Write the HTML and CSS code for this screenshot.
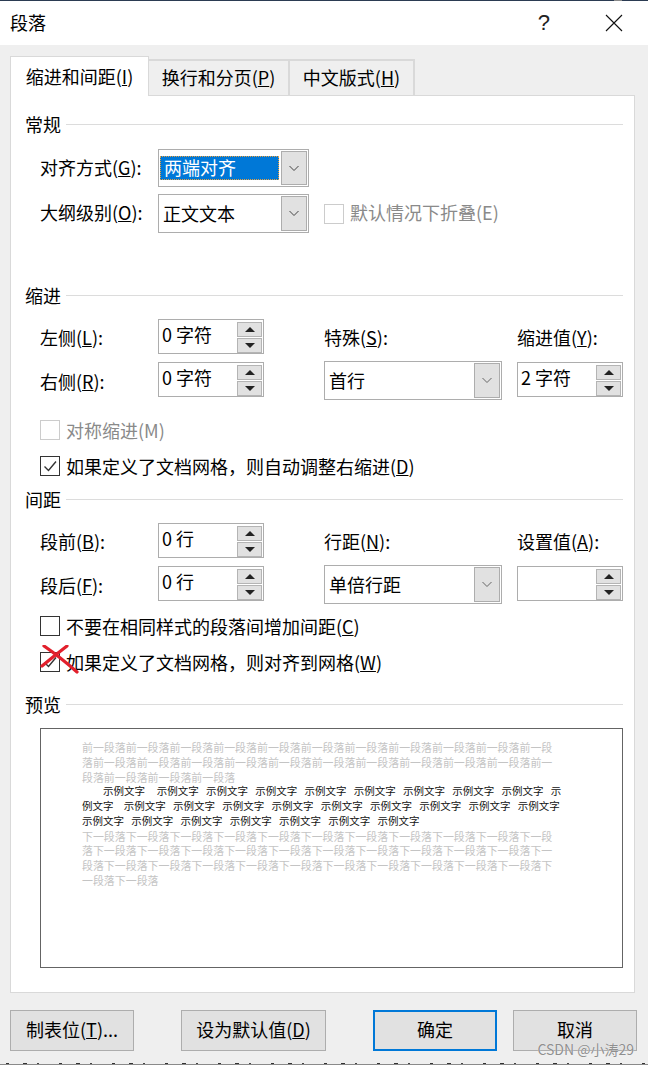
FILE: index.html
```html
<!DOCTYPE html>
<html lang="zh-CN">
<head>
<meta charset="utf-8">
<title>段落</title>
<link rel="stylesheet" href="styles.css">
</head>
<body>
<div class="window">
  <div class="topline"></div>
  <header class="titlebar">
    <span class="title">段落</span>
    <span class="help">?</span>
    <svg class="close" width="18" height="18" viewBox="0 0 18 18"><path d="M1 1 L17 17 M17 1 L1 17" stroke="#111" stroke-width="1.1" fill="none"/></svg>
  </header>
  <main class="dialog">
    <nav class="tabs">
      <div class="tab tab-active">缩进和间距(<u>I</u>)</div>
      <div class="tab tab-2">换行和分页(<u>P</u>)</div>
      <div class="tab tab-3">中文版式(<u>H</u>)</div>
    </nav>
    <div class="panel">
      <div class="heading"><span>常规</span></div>
      <div class="form form-general">
        <label class="lbl">对齐方式(<u>G</u>):</label>
        <div class="select sel-38">
          <div class="sel-value"><span class="highlight">两端对齐</span></div>
          <div class="arrow"><svg width="12" height="7" viewBox="0 0 12 7"><path d="M1.5 1 L6 5.5 L10.500 1" stroke="#444" fill="none"/></svg></div>
        </div>
        <div></div>
        <label class="lbl">大纲级别(<u>O</u>):</label>
        <div class="select sel-39">
          <div class="sel-value"><span class="val">正文文本</span></div>
          <div class="arrow"><svg width="12" height="7" viewBox="0 0 12 7"><path d="M1.5 1 L6 5.5 L10.500 1" stroke="#444" fill="none"/></svg></div>
        </div>
        <div class="check disabled"><span class="box"></span><span class="check-raised">默认情况下折叠(E)</span></div>
      </div>

      <div class="heading sec-indent"><span>缩进</span></div>
      <div class="form form-spin">
        <label class="lbl">左侧(<u>L</u>):</label>
        <div class="spinner"><span class="spin-text">0 字符</span><div class="spin-btns"><div class="spin-btn"><i class="up"></i></div><div class="spin-btn"><i class="down"></i></div></div></div>
        <label class="lbl col-3">特殊(<u>S</u>):</label>
        <label class="lbl">缩进值(<u>Y</u>):</label>

        <label class="lbl">右侧(<u>R</u>):</label>
        <div class="spinner shift"><span class="spin-text">0 字符</span><div class="spin-btns"><div class="spin-btn"><i class="up"></i></div><div class="spin-btn"><i class="down"></i></div></div></div>
        <div class="select sel-39 col-3">
          <div class="sel-value"><span class="val">首行</span></div>
          <div class="arrow"><svg width="12" height="7" viewBox="0 0 12 7"><path d="M1.5 1 L6 5.5 L10.500 1" stroke="#666" fill="none"/></svg></div>
        </div>
        <div class="spinner shift"><span class="spin-text">2 字符</span><div class="spin-btns"><div class="spin-btn"><i class="up"></i></div><div class="spin-btn"><i class="down"></i></div></div></div>
      </div>
      <div class="check disabled indent first-check"><span class="box"></span><span>对称缩进(M)</span></div>
      <div class="check indent next-check"><span class="box"><svg width="18" height="18" viewBox="0 0 18 18"><path d="M3.500 9.500 L7.500 13.500 L15 4.500" stroke="#333" stroke-width="1.400" fill="none"/></svg></span><span>如果定义了文档网格，则自动调整右缩进(<u>D</u>)</span></div>

      <div class="heading sec-spacing"><span>间距</span></div>
      <div class="form form-spin">
        <label class="lbl">段前(<u>B</u>):</label>
        <div class="spinner"><span class="spin-text">0 行</span><div class="spin-btns"><div class="spin-btn"><i class="up"></i></div><div class="spin-btn"><i class="down"></i></div></div></div>
        <label class="lbl col-3">行距(<u>N</u>):</label>
        <label class="lbl">设置值(<u>A</u>):</label>

        <label class="lbl">段后(<u>F</u>):</label>
        <div class="spinner shift"><span class="spin-text">0 行</span><div class="spin-btns"><div class="spin-btn"><i class="up"></i></div><div class="spin-btn"><i class="down"></i></div></div></div>
        <div class="select sel-39 col-3">
          <div class="sel-value"><span class="val">单倍行距</span></div>
          <div class="arrow"><svg width="12" height="7" viewBox="0 0 12 7"><path d="M1.5 1 L6 5.5 L10.500 1" stroke="#666" fill="none"/></svg></div>
        </div>
        <div class="spinner shift"><span class="spin-text"></span><div class="spin-btns"><div class="spin-btn"><i class="up"></i></div><div class="spin-btn"><i class="down"></i></div></div></div>
      </div>
      <div class="check indent spacing-check"><span class="box"></span><span>不要在相同样式的段落间增加间距(<u>C</u>)</span></div>
      <div class="check indent next-check marked">
        <span class="box"><svg width="18" height="18" viewBox="0 0 18 18"><path d="M3.500 9.500 L7.500 13.500 L15 4.500" stroke="#333" stroke-width="1.400" fill="none"/></svg></span>
        <span>如果定义了文档网格，则对齐到网格(<u>W</u>)</span>
        <svg class="red-x" width="40" height="30" viewBox="0 0 40 30"><path d="M2 21 Q14 11 27 1" stroke="#e2202c" stroke-width="3.200" fill="none" stroke-linecap="round"/><path d="M4 1 Q20 12 37 27" stroke="#e2202c" stroke-width="3.200" fill="none" stroke-linecap="round"/></svg>
      </div>

      <div class="heading sec-preview"><span>预览</span></div>
      <div class="preview">
        <div class="pv">前一段落前一段落前一段落前一段落前一段落前一段落前一段落前一段落前一段落前一段落前一段</div>
        <div class="pv">落前一段落前一段落前一段落前一段落前一段落前一段落前一段落前一段落前一段落前一段落前一</div>
        <div class="pv">段落前一段落前一段落前一段落</div>
        <div class="pv sample first-line"><span class="first-word">示例文字</span> 示例文字 示例文字 示例文字 示例文字 示例文字 示例文字 示例文字 示例文字 示</div>
        <div class="pv sample"><span class="tail-word">例文字</span> 示例文字 示例文字 示例文字 示例文字 示例文字 示例文字 示例文字 示例文字 示例文字</div>
        <div class="pv sample">示例文字 示例文字 示例文字 示例文字 示例文字 示例文字 示例文字</div>
        <div class="pv">下一段落下一段落下一段落下一段落下一段落下一段落下一段落下一段落下一段落下一段落下一段</div>
        <div class="pv">落下一段落下一段落下一段落下一段落下一段落下一段落下一段落下一段落下一段落下一段落下一</div>
        <div class="pv">段落下一段落下一段落下一段落下一段落下一段落下一段落下一段落下一段落下一段落下一段落下</div>
        <div class="pv">一段落下一段落</div>
      </div>
    </div>
    <footer class="buttons">
      <button class="btn btn-tabs">制表位(<u>T</u>)...</button>
      <button class="btn btn-default">设为默认值(<u>D</u>)</button>
      <button class="btn btn-ok">确定</button>
      <button class="btn btn-cancel">取消</button>
    </footer>
    <span class="watermark">CSDN @小涛29</span>
  </main>
  <div class="bottomline"></div>
</div>
</body>
</html>
```
FILE: styles.css
```css
* { box-sizing: border-box; }
html, body { margin: 0; padding: 0; }
body {
  width: 648px;
  height: 1065px;
  overflow: hidden;
  font-family: "Noto Sans CJK SC", "Liberation Sans", sans-serif;
  font-size: 18px;
  color: #000;
  background: #efefef;
}
u { text-underline-offset: 1px; text-decoration-thickness: 1px; }
.window { display: flex; flex-direction: column; height: 1065px; }
.topline { height: 1px; flex: none; background: linear-gradient(90deg, #2b3b52 0 614px, #8a8a8a 614px 622px, #2b3b52 622px); }
.titlebar {
  height: 44px;
  flex: none;
  background: #fff;
  display: flex;
  align-items: center;
  padding: 0 25px 0 10px;
}
.title { flex: 1; line-height: 24px; margin-top: -3px; }
.help { font-size: 22px; line-height: 24px; color: #222; margin-right: 55px; font-family: "Liberation Sans", sans-serif; }
.close { display: block; margin-top: -1px; }

.dialog { position: relative; flex: 1; background: #efefef; padding: 12px 13px 0 10px; display: flex; flex-direction: column; min-height: 0; }
.tabs { display: flex; align-items: flex-end; height: 39px; position: relative; z-index: 1; margin-bottom: -1px; }
.tab {
  height: 37px;
  border: 2px solid #d9d9d9;
  border-bottom: 0;
  border-left-width: 0;
  display: flex;
  align-items: center;
  justify-content: center;
  white-space: nowrap;
  line-height: 24px;
  padding-bottom: 3px;
}
.tab-active { height: 40px; width: 139px; background: #fff; border-left: 1px solid #d9d9d9; border-right: 1px solid #d9d9d9; border-top: 1px solid #d9d9d9; padding-bottom: 2px; }
.tab-2 { width: 141px; border-left: 0; }
.tab-3 { width: 125px; }
.panel {
  background: #fff;
  border: 1px solid #d9d9d9;
  height: 898px;
  flex: none;
  padding: 19px 11px 0 14px;
}
.heading { display: flex; align-items: center; gap: 5px; height: 20px; line-height: 20px; }
.heading span { padding-bottom: 2px; }
.heading::after { content: ""; flex: 1; height: 1px; background: #dcdcdc; margin-top: -1px; }
.sec-indent { margin-top: 53px; }
.sec-spacing { margin-top: 14px; }
.sec-preview { margin-top: 23px; }

.form { display: grid; margin-left: 15px; align-items: center; }
.form-general { margin-top: 14px; grid-template-columns: 118px 151px 1fr; row-gap: 7px; column-gap: 0; }
.form-general .check { margin-left: 15px; }
.form-general .lbl { margin-bottom: 3px; }
.check-raised { padding-bottom: 3px; }
.form-spin {
  margin-top: 13px;
  grid-template-columns: 118px 106px 60px 178px 15px 106px;
  grid-template-rows: 35px 39px;
  row-gap: 7px;
}
.form-spin .lbl:nth-child(4) { grid-column: 6; }
.form-spin .col-3 { grid-column: 4; }
.form-spin .select + .spinner { grid-column: 6; }
.lbl { white-space: nowrap; line-height: 20px; }

.select {
  border: 1px solid #adadad;
  background: #fff;
  display: flex;
  align-items: stretch;
}
.sel-38 { height: 38px; }
.sel-39 { height: 39px; }
.sel-value { flex: 1; display: flex; align-items: center; padding: 0 4px; line-height: 24px; white-space: nowrap; }
.val { padding-bottom: 2px; }
.highlight {
  flex: 1;
  height: 24px;
  margin: 0 -3px;
  padding: 0 3px;
  line-height: 21px;
  background: #0078d7;
  color: #fff;
  border: 1px dotted #e8a040;
}
.arrow {
  flex: none;
  width: 26px;
  margin: 1px;
  background: #e1e1e1;
  border: 1px solid #adadad;
  display: flex;
  align-items: center;
  justify-content: center;
}

.spinner {
  border: 1px solid #adadad;
  height: 35px;
  background: #fff;
  display: flex;
  align-self: start;
}
.spinner.shift { margin-top: 1px; }
.spin-text { flex: 1; padding: 1px 0 0 3px; line-height: 26px; white-space: pre; }
.spin-btns { flex: none; width: 25px; margin: 2px 1px 0 0; display: flex; flex-direction: column; gap: 1px; }
.spin-btn {
  height: 15px;
  background: #e1e1e1;
  border: 1px solid #b4b4b4;
  display: flex;
  align-items: center;
  justify-content: center;
}
.spin-btn i { display: block; width: 0; height: 0; border-left: 5px solid transparent; border-right: 5px solid transparent; }
.spin-btn .up { border-bottom: 5px solid #222; }
.spin-btn .down { border-top: 5px solid #222; }

.check { display: flex; align-items: center; gap: 6px; line-height: 20px; white-space: nowrap; position: relative; }
.box {
  width: 20px;
  height: 20px;
  flex: none;
  background: #fff;
  border: 1px solid #333;
  display: block;
}
.box svg { display: block; }
.check.disabled { color: #8a8a8a; }
.check.disabled .box { border-color: #ccc; }
.indent { margin-left: 15px; }
.first-check { margin-top: 20px; }
.next-check { margin-top: 16px; }
.spacing-check { margin-top: 12px; }
.red-x { position: absolute; left: 0; top: -7px; }

.preview {
  margin: 13px 0 0 15px;
  height: 240px;
  background: #fff;
  border: 1px solid #646464;
  padding: 11px 0 0 41px;
}
.pv {
  height: 14.75px;
  line-height: 14.75px;
  font-size: 10.95px;
  color: #c4c4c4;
  white-space: nowrap;
}
.sample { color: #111; font-size: 10.5px; word-spacing: 4.9px; }
.first-line { padding-left: 21px; }
.first-word { margin-right: 4.5px; }
.tail-word { margin-right: 3px; }

.buttons { display: flex; margin-top: 17px; height: 41px; width: 627px; }
.btn {
  height: 41px;
  background: #e1e1e1;
  border: 1px solid #adadad;
  font: inherit;
  line-height: 20px;
  color: #000;
  padding: 0 0 3px;
  white-space: nowrap;
}
.btn-tabs { width: 124px; margin-right: 47px; }
.btn-default { width: 145px; margin-right: 47px; }
.btn-ok { width: 124px; margin-right: 16px; border: 2px solid #0078d7; }
.btn-cancel { width: 124px; }
.watermark {
  position: absolute;
  right: 14px;
  top: 996px;
  font-size: 14px;
  line-height: 16px;
  color: #8f8f8f;
  text-shadow: 0 0 1px #fff;
  white-space: nowrap;
}
.bottomline {
  height: 2px;
  flex: none;
  background-color: #efefef;
  background-image:
    linear-gradient(#8a8a8a, #8a8a8a),
    repeating-linear-gradient(90deg, transparent 0 6px, #333 6px 9px, transparent 9px 23px, #333 23px 27px, transparent 27px 37px, #444 37px 39px, transparent 39px 53px);
  background-size: 100% 1px, 100% 1px;
  background-position: 0 100%, 0 0;
  background-repeat: no-repeat;
}
```
